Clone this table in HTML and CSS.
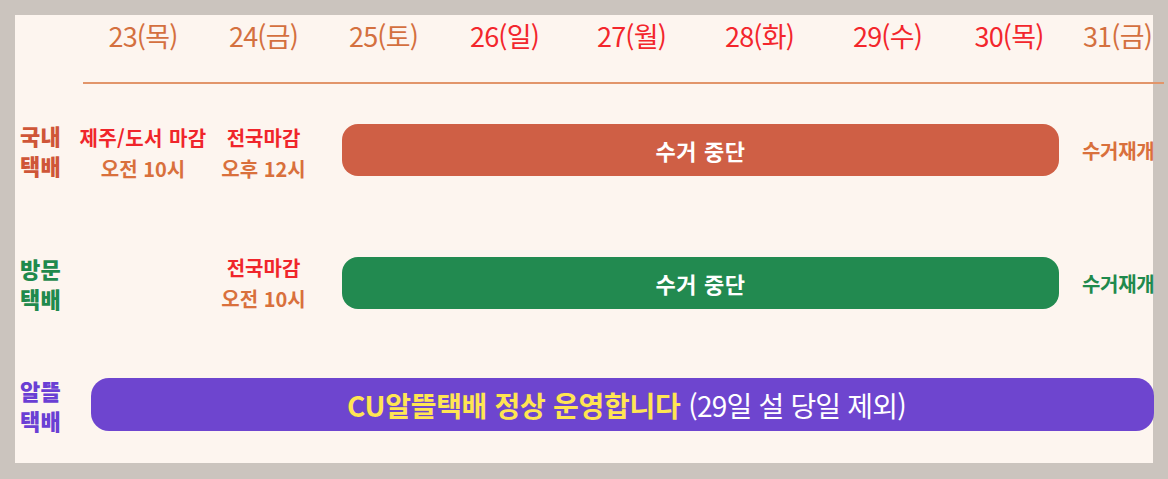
FILE: index.html
```html
<!DOCTYPE html>
<html lang="ko">
<head>
<meta charset="utf-8">
<title>설 연휴 택배 일정</title>
<link rel="stylesheet" href="styles.css">
</head>
<body>
<div class="panel">
  <div class="day c2">23(목)</div>
  <div class="day c3">24(금)</div>
  <div class="day c4">25(토)</div>
  <div class="day c5 red">26(일)</div>
  <div class="day c6 red">27(월)</div>
  <div class="day c7 red">28(화)</div>
  <div class="day c8 red">29(수)</div>
  <div class="day c9 red">30(목)</div>
  <div class="day c10 last">31(금)</div>
  <div class="rule"></div>

  <div class="label r1 orange-lbl">국내<br>택배</div>
  <div class="note r1 c2 first"><span class="red-t wide-t">제주/도서 마감</span><br><span class="org-t">오전 10시</span></div>
  <div class="note r1 c3 first"><span class="red-t">전국마감</span><br><span class="org-t">오후 12시</span></div>
  <div class="bar r1 bar-orange">수거 중단</div>
  <div class="resume r1 org-t">수거재개</div>

  <div class="label r2 green-lbl">방문<br>택배</div>
  <div class="note r2 c3"><span class="red-t">전국마감</span><br><span class="org-t">오전 10시</span></div>
  <div class="bar r2 bar-green">수거 중단</div>
  <div class="resume r2 grn-t">수거재개</div>

  <div class="label r3 purple-lbl">알뜰<br>택배</div>
  <div class="wide r3"><span class="wide-text"><span class="yellow">CU알뜰택배 정상 운영합니다</span> <span class="plain">(29일 설 당일 제외)</span></span></div>
</div>
</body>
</html>
```
FILE: styles.css
```css
html, body {
  margin: 0;
  padding: 0;
  background: #cbc4be;
  overflow: hidden;
}

body {
  font-family: "Noto Sans CJK KR", "Noto Sans", sans-serif;
  width: 1168px;
  height: 479px;
}

.panel {
  margin: 15px;
  width: 1138px;
  height: 448px;
  box-sizing: border-box;
  padding-bottom: 4px;
  background: #fdf5ef;
  display: grid;
  grid-template-columns: 68px 120px 121px 119px 123px 131px 125px 131px 112px 88px;
  grid-template-rows: 67px 2px 132px 134px 109px;
}

.c2 { grid-column: 2; }
.c3 { grid-column: 3; }
.c4 { grid-column: 4; }
.c5 { grid-column: 5; }
.c6 { grid-column: 6; }
.c7 { grid-column: 7; }
.c8 { grid-column: 8; }
.c9 { grid-column: 9; }
.c10 { grid-column: 10; }

.r1 { grid-row: 3; }
.r2 { grid-row: 4; }
.r3 { grid-row: 5; }

.day {
  grid-row: 1;
  justify-self: center;
  align-self: start;
  padding-top: 4px;
  font-size: 27px;
  line-height: 34px;
  letter-spacing: -0.8px;
  color: #d4703f;
  white-space: nowrap;
}

.day.red { color: #f3262c; }
.day.last { justify-self: end; margin-right: 1px; }

.rule {
  grid-row: 2;
  grid-column: 2 / -1;
  margin-right: -11px;
  background: #e2956a;
}

.label {
  grid-column: 1;
  align-self: center;
  padding-left: 5px;
  font-size: 22px;
  font-weight: 900;
  line-height: 30px;
  letter-spacing: 0.3px;
}

.orange-lbl { color: #cf5638; }
.green-lbl { color: #1f8a4d; }
.purple-lbl { color: #6a3fd4; }

.note {
  align-self: center;
  justify-self: center;
  text-align: center;
  font-size: 20px;
  font-weight: 700;
  line-height: 31px;
  white-space: nowrap;
}

.note.first { margin-top: 5px; }

.wide-t { letter-spacing: 0.4px; }

.red-t { color: #f0252b; }
.org-t { color: #d9703c; }
.grn-t { color: #1f8a4d; }

.bar {
  grid-column: 4 / 10;
  margin-left: 18px;
  margin-right: 6px;
  height: 52px;
  align-self: center;
  border-radius: 16px;
  display: flex;
  align-items: center;
  justify-content: center;
  color: #ffffff;
  font-size: 22px;
  font-weight: 700;
  letter-spacing: 0.6px;
}

.bar-orange { background: #cf5f45; }
.bar-green { background: #228a50; }

.resume {
  grid-column: 10;
  justify-self: start;
  align-self: center;
  padding-left: 17px;
  font-size: 20px;
  font-weight: 700;
  letter-spacing: -0.3px;
  white-space: nowrap;
}

.wide {
  grid-column: 2 / -1;
  margin-left: 8px;
  margin-right: -1px;
  height: 53px;
  align-self: center;
  border-radius: 18px;
  background: #6e45cf;
  display: flex;
  align-items: center;
  justify-content: center;
  font-size: 28px;
  white-space: nowrap;
}

.wide-text {
  margin-left: 8px;
}

.yellow {
  color: #ffe552;
  font-weight: 700;
  letter-spacing: -0.3px;
}

.plain {
  color: #ffffff;
  font-weight: 400;
  letter-spacing: -0.8px;
}
```
